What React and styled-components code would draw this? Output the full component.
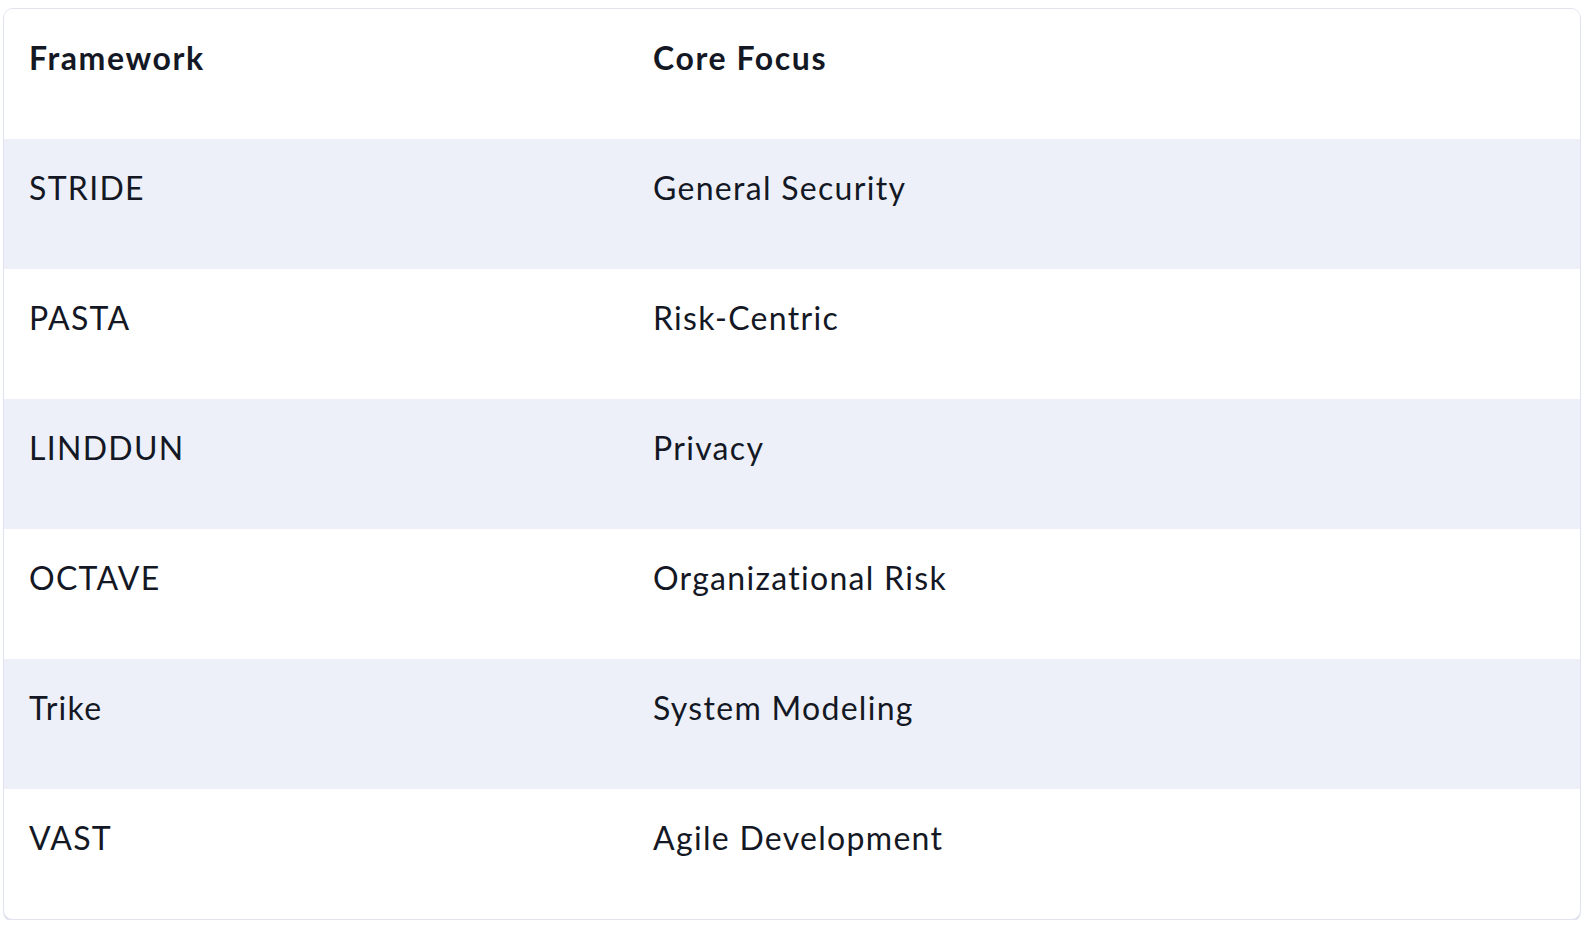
import React from 'react';
import styled, { createGlobalStyle } from 'styled-components';

const GlobalStyle = createGlobalStyle`
  html, body {
    margin: 0;
    padding: 0;
    background: #ffffff;
  }
  body {
    font-family: Lato, "Noto Sans", sans-serif;
    color: #141824;
  }
`;

const Page = styled.div`
  padding: 8px 8px 0 3px;
`;

const Card = styled.div`
  width: 1578px;
  box-sizing: border-box;
  border: 1px solid #e1e4f0;
  border-radius: 10px;
  box-shadow: 0 2px 1px #e1e4f0;
  overflow: hidden;
  background: #ffffff;
`;

const Table = styled.table`
  width: 100%;
  border-collapse: collapse;
  table-layout: fixed;
`;

const Row = styled.tr`
  height: 130px;
  background: ${(p) => (p.$striped ? '#edf0f9' : '#ffffff')};
`;

const Cell = styled.td`
  box-sizing: border-box;
  padding: 25px 24px 0 25px;
  vertical-align: top;
  text-align: left;
  font-size: 32px;
  line-height: 48px;
  font-weight: ${(p) => (p.$head ? 700 : 400)};
  letter-spacing: ${(p) => (p.$head ? '1.6px' : '1.3px')};
  width: ${(p) => p.$width || 'auto'};
`;

const rows = [
  ['STRIDE', 'General Security'],
  ['PASTA', 'Risk-Centric'],
  ['LINDDUN', 'Privacy'],
  ['OCTAVE', 'Organizational Risk'],
  ['Trike', 'System Modeling'],
  ['VAST', 'Agile Development'],
];

export default function App() {
  return (
    <>
      <GlobalStyle />
      <Page>
        <Card>
          <Table>
            <thead>
              <Row>
                <Cell as="th" $head $width="624px">
                  Framework
                </Cell>
                <Cell as="th" $head>
                  Core Focus
                </Cell>
              </Row>
            </thead>
            <tbody>
              {rows.map(([name, focus], i) => (
                <Row key={name} $striped={i % 2 === 0}>
                  <Cell>{name}</Cell>
                  <Cell>{focus}</Cell>
                </Row>
              ))}
            </tbody>
          </Table>
        </Card>
      </Page>
    </>
  );
}
